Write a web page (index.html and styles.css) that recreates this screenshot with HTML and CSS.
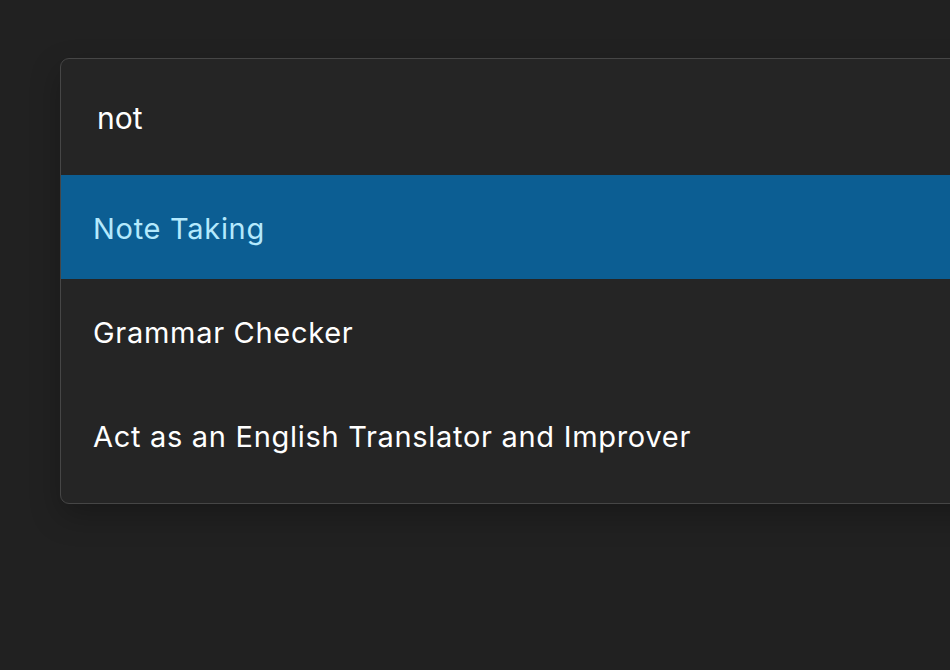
FILE: index.html
```html
<!DOCTYPE html>
<html>
<head>
<meta charset="utf-8">
<link rel="stylesheet" href="styles.css">
</head>
<body>
<div class="palette">
  <div class="search">not</div>
  <ul class="list">
    <li class="item active">Note Taking</li>
    <li class="item">Grammar Checker</li>
    <li class="item">Act as an English Translator and Improver</li>
  </ul>
</div>
</body>
</html>
```
FILE: styles.css
```css
html, body {
  margin: 0;
  height: 100%;
  overflow: hidden;
}
body {
  background: #212121;
  padding: 58px 0 0 60px;
  box-sizing: border-box;
  font-family: Inter, "Noto Sans", sans-serif;
  -webkit-font-smoothing: antialiased;
}
.palette {
  width: 1000px;
  background: #252525;
  border: 1px solid #464646;
  border-radius: 9px;
  box-shadow: 0 12px 30px rgba(0, 0, 0, 0.25);
  padding-bottom: 16px;
}
.search {
  height: 116px;
  display: flex;
  align-items: center;
  padding-left: 36px;
  font-size: 30px;
  color: #ffffff;
  padding-top: 2px;
  box-sizing: border-box;
}
.list {
  list-style: none;
  margin: 0;
  padding: 0;
}
.item {
  height: 104px;
  box-sizing: border-box;
  padding-top: 2px;
  display: flex;
  align-items: center;
  padding-left: 32px;
  font-size: 29px;
  letter-spacing: 0.7px;
  color: #ffffff;
}
.item.active {
  background: #0c5e93;
  color: #b4e9fd;
}
```
